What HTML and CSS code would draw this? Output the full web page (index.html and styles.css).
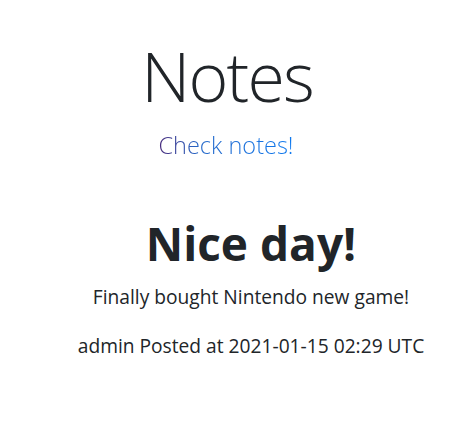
FILE: index.html
```html
<!DOCTYPE html>
<html>
<head>
<meta charset="utf-8">
<link rel="stylesheet" href="styles.css">
</head>
<body>
<header class="hero">
  <h1 class="title">Notes</h1>
  <a class="lead-link" href="#">Check notes!</a>
</header>
<main class="post">
  <h2 class="post-title">Nice day!</h2>
  <p class="post-body">Finally bought Nintendo new game!</p>
  <p class="post-meta">admin Posted at 2021-01-15 02:29 UTC</p>
</main>
</body>
</html>
```
FILE: styles.css
```css
html, body {
  margin: 0;
  padding: 0;
  background: #fff;
}
body {
  font-family: "Open Sans", "Noto Sans", sans-serif;
  color: #212529;
}
.hero {
  display: flex;
  flex-direction: column;
  align-items: center;
  padding: 31px 16px 0 0;
}
.title {
  margin: 0;
  font-size: 68px;
  font-weight: 300;
  letter-spacing: -1.8px;
  line-height: 90px;
}
.lead-link {
  margin-top: 9px;
  margin-right: 2px;
  font-size: 23.5px;
  font-weight: 300;
  line-height: 30px;
  text-decoration: none;
  background: linear-gradient(90deg, #4a2a7a 0%, #2668c8 30%, #0f7af0 100%);
  -webkit-background-clip: text;
  background-clip: text;
  color: transparent;
}
.post {
  display: flex;
  flex-direction: column;
  align-items: center;
  padding: 55px 0 0 32px;
}
.post-title {
  margin: 0;
  font-size: 46px;
  font-weight: 700;
  line-height: 56px;
}
.post-body {
  margin: 12px 0 0;
  font-size: 19.2px;
  line-height: 27px;
}
.post-meta {
  margin: 22px 0 0;
  font-size: 19.2px;
  line-height: 27px;
}
```
